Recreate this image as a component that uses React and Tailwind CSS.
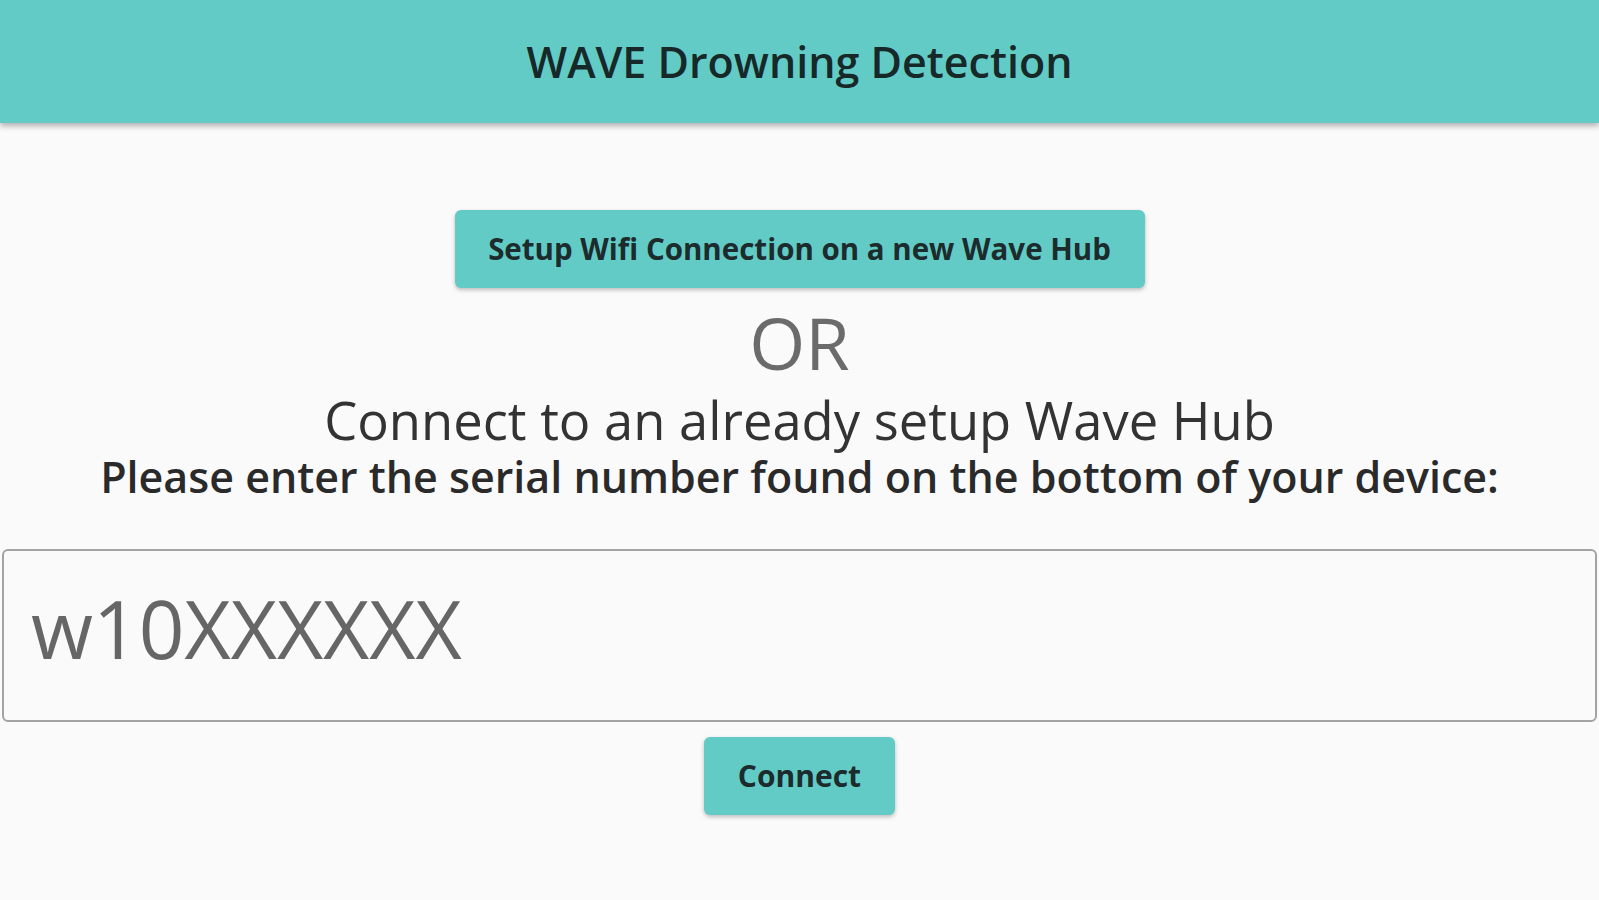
export default function App() {
  return (
    <div className="min-h-[900px] w-full bg-[#fafafa] flex flex-col" style={{ fontFamily: '"Open Sans", "Noto Sans", sans-serif' }}>
      <header className="h-[123px] bg-[#63cbc6] flex items-center justify-center shadow-[0_3px_6px_rgba(0,0,0,0.3)] relative z-10">
        <h1 className="text-[43px] leading-none font-semibold text-[#172828]">WAVE Drowning Detection</h1>
      </header>
      <main className="flex flex-col items-center pt-[87px]">
        <button className="w-[690px] h-[78px] rounded-[6px] bg-[#63cbc6] text-[#1c2c2c] text-[29.5px] leading-none font-bold shadow-[0_2px_4px_rgba(0,0,0,0.25)]">
          Setup Wifi Connection on a new Wave Hub
        </button>
        <div className="text-[72px] leading-none text-[#6b6b6b] mt-[18px]">OR</div>
        <div className="text-[52.5px] leading-none text-[#333333] mt-[16px]">Connect to an already setup Wave Hub</div>
        <div className="text-[43px] leading-none font-semibold text-[#2a2a2a] mt-[8px]">Please enter the serial number found on the bottom of your device:</div>
        <div className="self-stretch mx-[2px] mt-[51px] h-[173px] border-2 border-[#a3a3a3] rounded-[6px] flex items-center pl-[27px] pb-[14px]">
          <span className="text-[80px] text-[#666666] leading-none">w10XXXXXX</span>
        </div>
        <button className="mt-[15px] w-[191px] h-[78px] rounded-[6px] bg-[#63cbc6] text-[#1c2c2c] text-[30px] leading-none font-bold shadow-[0_2px_4px_rgba(0,0,0,0.25)]">
          Connect
        </button>
      </main>
    </div>
  );
}
